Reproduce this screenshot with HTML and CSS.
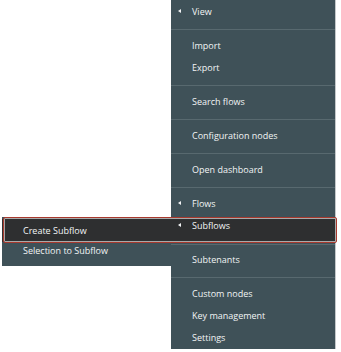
FILE: index.html
```html
<!DOCTYPE html>
<html>
<head>
<meta charset="utf-8">
<link rel="stylesheet" href="styles.css">
</head>
<body>
<div class="page">
  <ul class="menu">
    <li class="item has-sub"><span class="caret"></span>View</li>
    <li class="sep"></li>
    <li class="item">Import</li>
    <li class="item">Export</li>
    <li class="sep"></li>
    <li class="item">Search flows</li>
    <li class="sep"></li>
    <li class="item">Configuration nodes</li>
    <li class="sep"></li>
    <li class="item">Open dashboard</li>
    <li class="sep"></li>
    <li class="item has-sub"><span class="caret"></span>Flows</li>
    <li class="item has-sub active"><span class="caret"></span>Subflows</li>
    <li class="sep sep-after-active"></li>
    <li class="item">Subtenants</li>
    <li class="sep"></li>
    <li class="item">Custom nodes</li>
    <li class="item">Key management</li>
    <li class="item">Settings</li>
  </ul>
  <ul class="submenu">
    <li class="sub-item active">Create Subflow</li>
    <li class="sub-item">Selection to Subflow</li>
  </ul>
  <div class="highlight-box"></div>
</div>
</body>
</html>
```
FILE: styles.css
```css
html, body {
  margin: 0;
  padding: 0;
  background: #ffffff;
}
body {
  font-family: "Open Sans", "Noto Sans", sans-serif;
  font-size: 9px;
  color: #f2f4f5;
}
.page {
  position: relative;
  width: 341px;
  height: 352px;
  overflow: hidden;
}
ul {
  list-style: none;
  margin: 0;
  padding: 0;
}
.menu {
  margin-left: 171px;
  width: 164px;
  background: #3f5158;
  border-right: 1px solid #c4c8ca;
  padding-bottom: 1px;
}
.item {
  position: relative;
  height: 22px;
  line-height: 23px;
  padding-left: 21px;
  white-space: nowrap;
}
.caret {
  position: absolute;
  left: 7px;
  top: 9px;
  width: 0;
  height: 0;
  border-top: 2.5px solid transparent;
  border-bottom: 2.5px solid transparent;
  border-right: 3px solid #f2f4f5;
}
.item.active {
  margin-top: 5px;
  height: 23px;
  line-height: 14px;
  background: #2e2f30;
}
.item.active .caret {
  top: 4px;
}
.sep {
  height: 1px;
  margin: 7px 0 4px;
  background: #58696f;
}
.sep.sep-after-active {
  margin: 2px 0 3px;
}
.submenu {
  position: absolute;
  left: 2px;
  top: 217px;
  width: 169px;
  padding-top: 2px;
  background: #3f5158;
}
.sub-item {
  height: 23px;
  line-height: 23px;
  padding-left: 21px;
  white-space: nowrap;
}
.sub-item.active {
  background: #2e2f30;
}
.sub-item + .sub-item {
  height: 24px;
  line-height: 18px;
}
.highlight-box {
  position: absolute;
  left: 3px;
  top: 217px;
  width: 332px;
  height: 24px;
  border: 1.5px solid #a8392d;
  border-radius: 2px;
  box-shadow: inset 0 0 0 1px #a9a9a9;
  pointer-events: none;
}
```
